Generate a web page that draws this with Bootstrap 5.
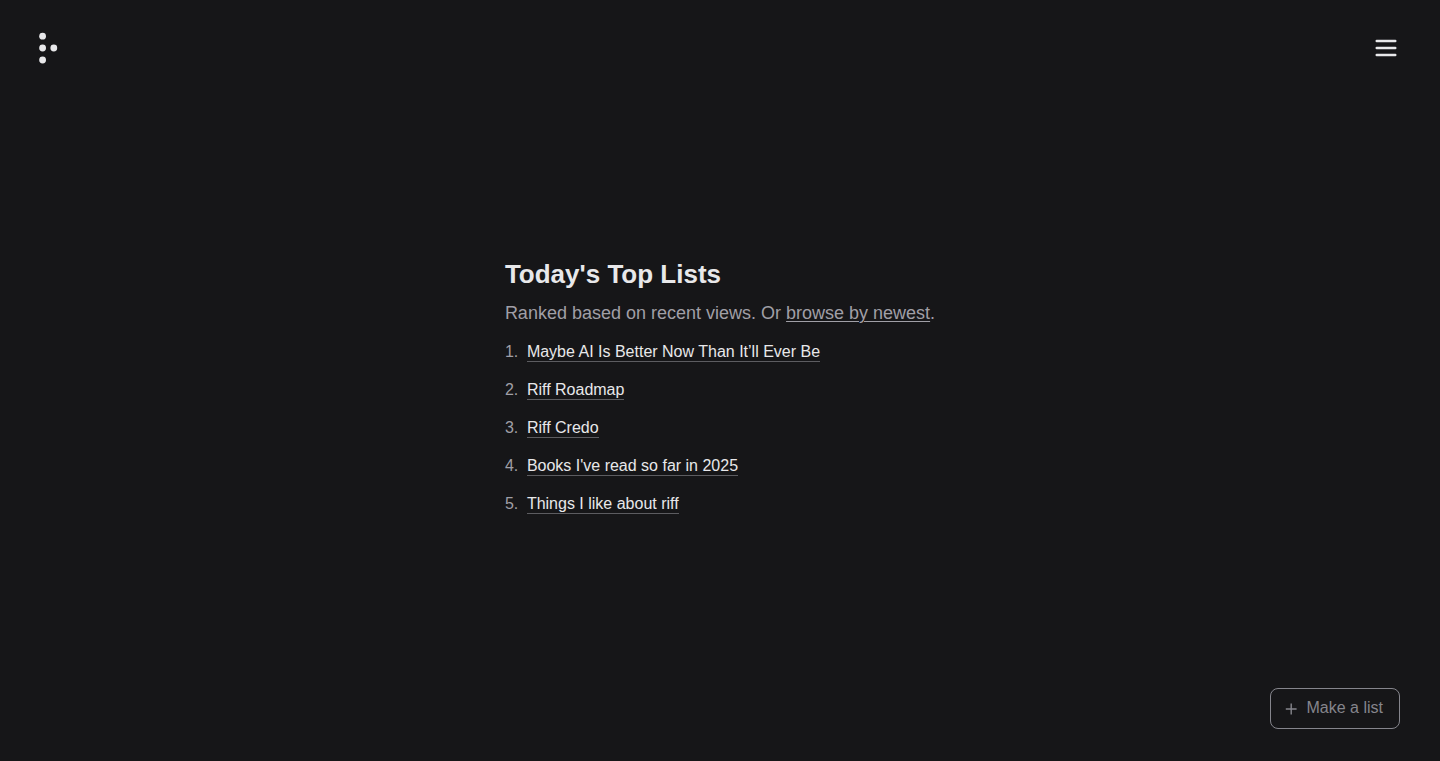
<!DOCTYPE html>
<html lang="en">
<head>
<meta charset="utf-8">
<meta name="viewport" content="width=device-width, initial-scale=1">
<title>Today's Top Lists</title>
<link href="https://cdn.jsdelivr.net/npm/bootstrap@5.3.0/dist/css/bootstrap.min.css" rel="stylesheet">
<style>
body { background: #161618; color: #a09fa6; font-family: "Liberation Sans", Arial, sans-serif; line-height: 24px; }
.site-header, .site-footer { padding: 32px 40px; }
.logo-link svg, .menu-button svg { display: block; }
.logo-link { margin-left: -2px; }
.logo-link, .menu-button { color: #e8e8ea; }
.page-main { padding: 22px 16px 0; }
.page-title { color: #e8e8ea; font-size: 26px; line-height: 32px; font-weight: 700; }
.intro { font-size: 18px; line-height: 30px; }
.intro a { color: inherit; text-underline-offset: 2px; text-decoration-thickness: 1px; }
.top-lists { counter-reset: rank; gap: 14px; }
.top-lists li { counter-increment: rank; }
.top-lists li::before { content: counter(rank) "."; display: inline-block; width: 22px; }
.top-lists a { color: #e8e8ea; border-bottom: 1px solid #5c5c60; padding-bottom: 1px; }
.make-button { --bs-btn-color: #85858c; --bs-btn-border-color: #85858c; --bs-btn-hover-color: #e8e8ea; --bs-btn-hover-border-color: #e8e8ea; --bs-btn-border-radius: 8px; --bs-btn-padding-x: 16px; --bs-btn-padding-y: 7px; --bs-btn-line-height: 24px; padding-left: 14px; padding-bottom: 8px; gap: 9px; }
</style>
</head>
<body class="d-flex flex-column min-vh-100">
<header class="site-header d-flex justify-content-between align-items-center">
  <a href="#" class="logo-link" aria-label="Home">
    <svg width="20" height="32" viewBox="0 0 20 32" fill="currentColor" aria-hidden="true"><circle cx="4.6" cy="4.2" r="3.4"/><circle cx="4.6" cy="16" r="3.4"/><circle cx="15.8" cy="16" r="3.4"/><circle cx="4.6" cy="28" r="3.4"/></svg>
  </a>
  <button type="button" class="menu-button btn p-0 border-0" aria-label="Menu">
    <svg width="28" height="28" viewBox="0 0 28 28" stroke="currentColor" stroke-width="2.4" stroke-linecap="round" aria-hidden="true"><path d="M4.7 7h18.6M4.7 14h18.6M4.7 21h18.6"/></svg>
  </button>
</header>
<main class="page-main flex-grow-1 d-flex justify-content-center align-items-center">
  <section>
    <h1 class="page-title mb-2">Today's Top Lists</h1>
    <p class="intro mb-2">Ranked based on recent views. Or <a href="#">browse by newest</a>.</p>
    <ol class="top-lists list-unstyled d-flex flex-column pt-1 mb-0">
      <li><a href="#" class="text-decoration-none">Maybe AI Is Better Now Than It’ll Ever Be</a></li>
      <li><a href="#" class="text-decoration-none">Riff Roadmap</a></li>
      <li><a href="#" class="text-decoration-none">Riff Credo</a></li>
      <li><a href="#" class="text-decoration-none">Books I've read so far in 2025</a></li>
      <li><a href="#" class="text-decoration-none">Things I like about riff</a></li>
    </ol>
  </section>
</main>
<footer class="site-footer d-flex justify-content-end">
  <button type="button" class="make-button btn d-flex align-items-center">
    <svg width="13" height="13" viewBox="0 0 13 13" stroke="currentColor" stroke-width="1.4" aria-hidden="true"><path d="M.8 7h10.800M6.200 1.600v10.800"/></svg>
    Make a list
  </button>
</footer>
</body>
</html>
